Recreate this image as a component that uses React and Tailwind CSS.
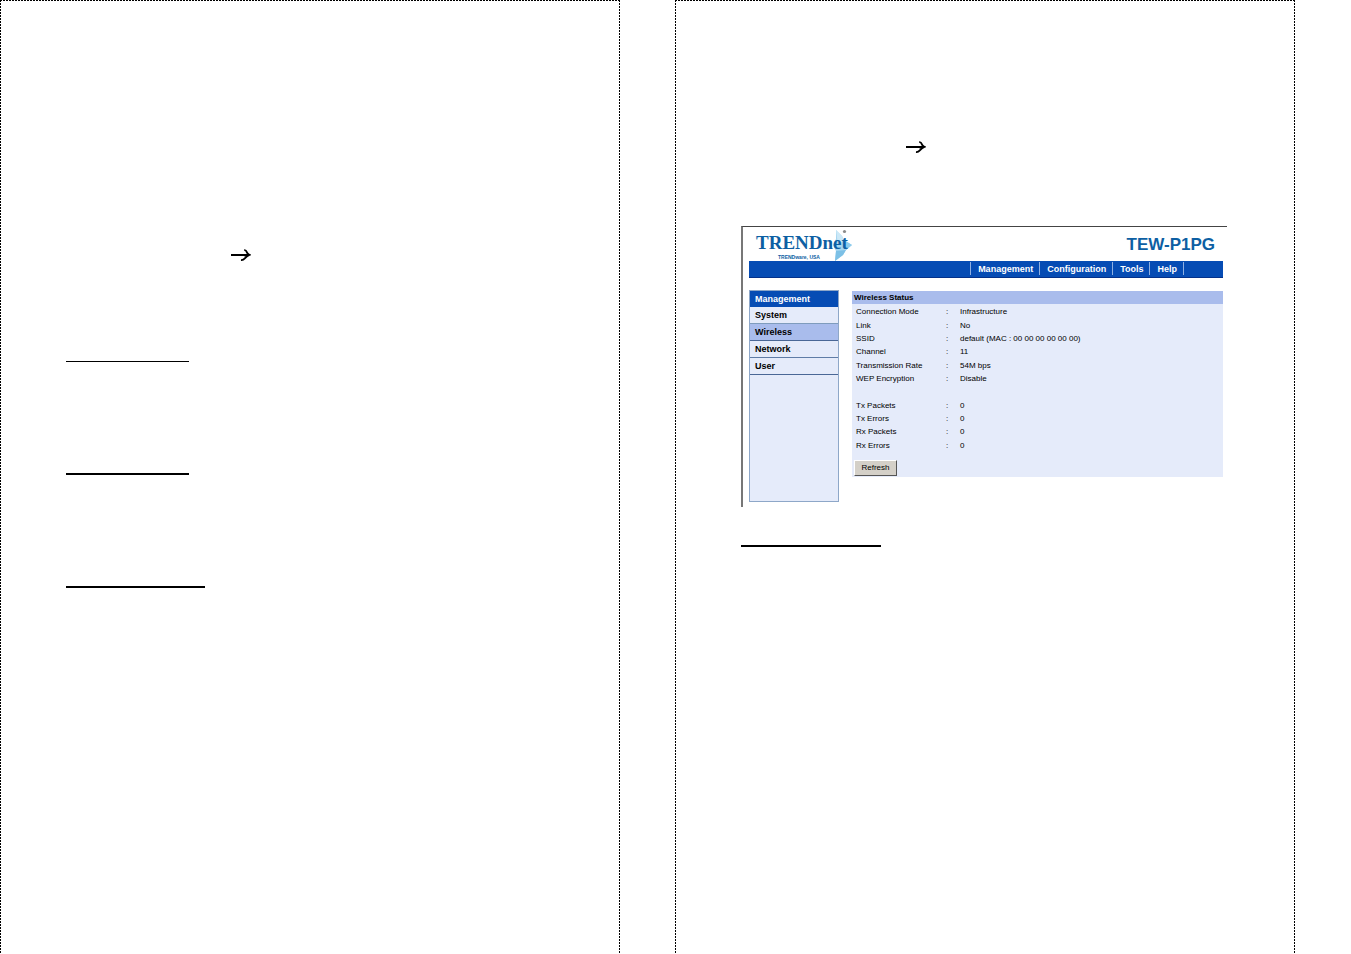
const menuLinks = ["Management", "Configuration", "Tools", "Help"];

const sideLinks = [
  { label: "System", row: "border-[#7f9cbd]" },
  { label: "Wireless", row: "border-[#4a6796] bg-[#a9bcec]" },
  { label: "Network", row: "border-[#5f7ca6]" },
  { label: "User", row: "border-[#4a6796]" },
];

const statusRows = [
  ["Connection Mode", "Infrastructure"],
  ["Link", "No"],
  ["SSID", "default (MAC : 00 00 00 00 00 00)"],
  ["Channel", "11"],
  ["Transmission Rate", "54M bps"],
  ["WEP Encryption", "Disable"],
  null,
  ["Tx Packets", "0"],
  ["Tx Errors", "0"],
  ["Rx Packets", "0"],
  ["Rx Errors", "0"],
];

function Arrow() {
  return (
    <svg width="20" height="12" viewBox="0 0 20 12" fill="none" aria-hidden="true" className="block">
      <path d="M0 6H18" stroke="#000" strokeWidth="2" />
      <path
        d="M13.2 1.2C15.2 1 15.4 2 15.9 3.4C16.3 4.6 17 5.2 18.4 5.8C16.4 6.6 15 8 13.8 9.4C12.6 10.8 11.8 11.2 10 11"
        stroke="#000"
        strokeWidth="1.8"
      />
      <path d="M14.5 5L18.9 5.7L13.5 8Z" fill="#000" />
    </svg>
  );
}

function Page({ children }) {
  return (
    <section className="min-w-0 px-[66px] [background:repeating-linear-gradient(90deg,#000_0_2px,#fff_2px_3px)_top/100%_1px_no-repeat,repeating-linear-gradient(180deg,#000_0_2px,#fff_2px_3px)_left/1px_100%_no-repeat,repeating-linear-gradient(180deg,#000_0_2px,#fff_2px_3px)_right/1px_100%_no-repeat]">
      {children}
    </section>
  );
}

function Logo() {
  return (
    <div className="relative ml-[7px] w-[100px] text-[#0d5fa3]">
      <svg
        width="26"
        height="34"
        viewBox="0 0 26 34"
        aria-hidden="true"
        className="absolute -top-1 left-[74px]"
      >
        <path d="M6 1L12 7L14 11L22 16L16 21L13 26L5 32L6 22L3 16L6 10Z" fill="#a5d6f0" />
        <path d="M6 1L12 7L14 11L8 16Z" fill="#cbe8f7" />
        <path d="M14 11L22 16L16 21Z" fill="#8fcbec" />
        <path d="M6 22L16 21L13 26L5 32Z" fill="#7cc0e6" />
        <circle cx="14.5" cy="2.5" r="1.6" fill="#8b8b8b" />
      </svg>
      <div className="relative font-['Liberation_Serif',serif] text-[19px] leading-5 font-bold">TRENDnet</div>
      <div className="relative pl-[22px] text-[5px] leading-[8px] font-bold">TRENDware, USA</div>
    </div>
  );
}

function StatusPanel() {
  return (
    <div className="mr-[2px] border-t border-l-2 border-t-[#444] border-l-[#777] pr-1 pb-[5px] pl-[6px]">
      <header className="flex h-[34px] items-start justify-between pt-[6px] pr-2">
        <Logo />
        <h1 className="pt-[2px] text-[17px] leading-5 font-bold text-[#0d5fa3]">TEW-P1PG</h1>
      </header>
      <nav className="flex h-[17px] items-start justify-end border-b border-[#04318a] bg-[#064cb4] pt-px pr-[39px]">
        {menuLinks.map((label) => (
          <a
            key={label}
            href="#"
            className="h-[13px] border-l border-[#8fb0e2] pr-[6px] pl-[7px] text-[9px] leading-[15px] font-bold text-white"
          >
            {label}
          </a>
        ))}
        <span className="h-[13px] w-px bg-[#8fb0e2]" />
      </nav>
      <div className="mt-3 flex items-start gap-[13px]">
        <aside className="h-[212px] w-[90px] shrink-0 border border-[#8ea7c8] bg-[#e5ebfa] text-[9px] leading-4 font-bold text-black">
          <h2 className="h-4 bg-[#064cb4] pl-[5px] leading-[17px] text-white">Management</h2>
          <ul>
            {sideLinks.map(({ label, row }) => (
              <li key={label} className={`border-b ${row}`}>
                <a href="#" className="block h-4 pl-[5px] leading-[17px]">{label}</a>
              </li>
            ))}
          </ul>
        </aside>
        <main className="mt-px grow bg-[#e5ebfa]">
          <h2 className="h-[13px] bg-[#a9bcec] pl-[2px] text-[8px] leading-[14px] font-bold text-black">
            Wireless Status
          </h2>
          <table className="mt-px h-[147px] w-full table-fixed text-left text-[8px] leading-[13px] text-black">
            <tbody>
              {statusRows.map((row, i) =>
                row ? (
                  <tr key={i}>
                    <th scope="row" className="w-[94px] p-0 pl-1 font-normal">{row[0]}</th>
                    <td className="w-[14px] p-0">:</td>
                    <td className="p-0">{row[1]}</td>
                  </tr>
                ) : (
                  <tr key={i}>
                    <td colSpan={3} className="p-0">&nbsp;</td>
                  </tr>
                ),
              )}
            </tbody>
          </table>
          <div className="flex pt-2 pb-px pl-[2px]">
            <button
              type="button"
              className="h-4 w-[43px] border border-t-white border-r-[#555] border-b-[#555] border-l-white bg-[#d4d0c8] text-[8px] leading-[14px] text-black"
            >
              Refresh
            </button>
          </div>
        </main>
      </div>
    </div>
  );
}

export default function App() {
  return (
    <div className="grid min-h-screen grid-cols-2 gap-[55px] bg-white pr-14 font-['Liberation_Sans',Arial,sans-serif]">
      <Page>
        <div className="pt-[249px] pl-[165px]">
          <Arrow />
        </div>
        <hr className="mt-[100px] w-[123px] border-t border-black" />
        <hr className="mt-[111px] w-[123px] border-t-2 border-black" />
        <hr className="mt-[111px] w-[139px] border-t-2 border-black" />
      </Page>
      <Page>
        <div className="pt-[141px] pb-[73px] pl-[165px]">
          <Arrow />
        </div>
        <StatusPanel />
        <hr className="mt-[38px] w-[140px] border-t-2 border-black" />
      </Page>
    </div>
  );
}
